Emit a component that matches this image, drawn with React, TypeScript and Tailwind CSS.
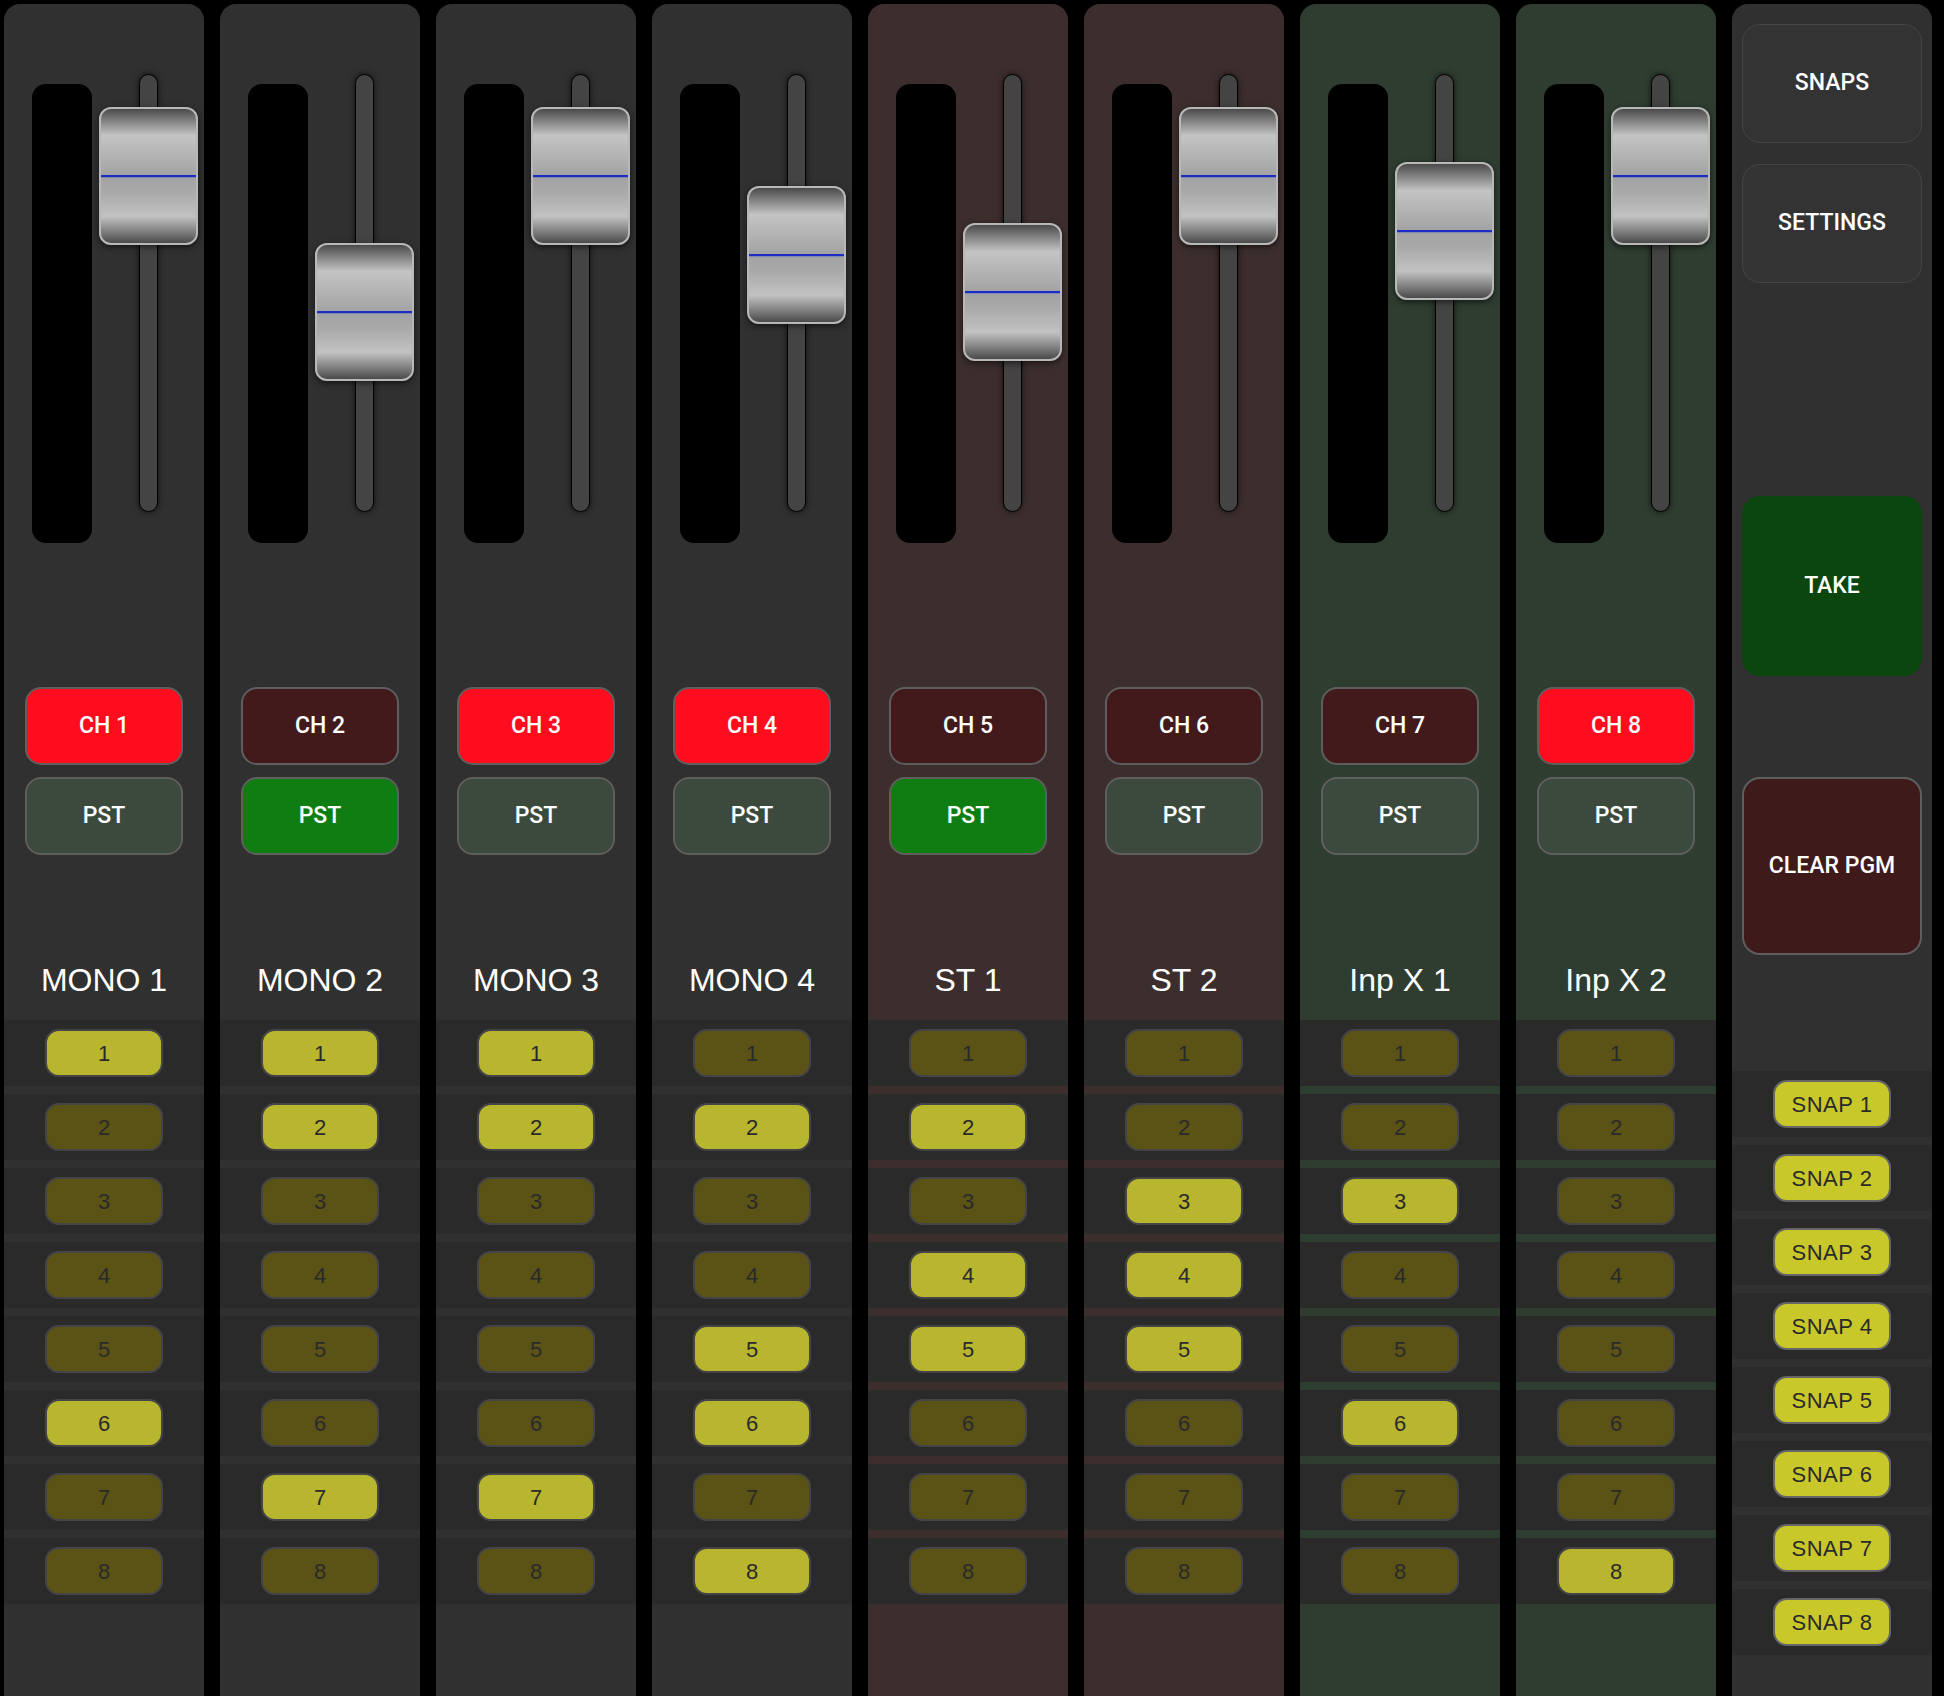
type Strip = {
  name: string;
  ch: string;
  chOn: boolean;
  pstOn: boolean;
  knob: number;
  buses: number[];
  tone: "gray" | "red" | "green";
};

const strips: Strip[] = [
  { name: "MONO 1", ch: "CH 1", chOn: true, pstOn: false, knob: 33, buses: [1, 6], tone: "gray" },
  { name: "MONO 2", ch: "CH 2", chOn: false, pstOn: true, knob: 169, buses: [1, 2, 7], tone: "gray" },
  { name: "MONO 3", ch: "CH 3", chOn: true, pstOn: false, knob: 33, buses: [1, 2, 7], tone: "gray" },
  { name: "MONO 4", ch: "CH 4", chOn: true, pstOn: false, knob: 112, buses: [2, 5, 6, 8], tone: "gray" },
  { name: "ST 1", ch: "CH 5", chOn: false, pstOn: true, knob: 149, buses: [2, 4, 5], tone: "red" },
  { name: "ST 2", ch: "CH 6", chOn: false, pstOn: false, knob: 33, buses: [3, 4, 5], tone: "red" },
  { name: "Inp X 1", ch: "CH 7", chOn: false, pstOn: false, knob: 88, buses: [3, 6], tone: "green" },
  { name: "Inp X 2", ch: "CH 8", chOn: true, pstOn: false, knob: 33, buses: [8], tone: "green" },
];

const toneBg = {
  gray: "bg-[#303030]",
  red: "bg-[#3d2e2e]",
  green: "bg-[#2f3d31]",
};

const sans = "font-['Liberation_Sans',Arial,sans-serif]";
const med = "font-['Roboto','Liberation_Sans',sans-serif] font-medium";

function Fader({ top }: { top: number }) {
  return (
    <div className="relative ml-[7px] w-[99px] h-[438px]">
      <div className="mx-auto h-full w-[19px] rounded-full border border-black bg-[#444444] shadow-[0_0_6px_rgba(0,0,0,0.7)]" />
      <div
        className="absolute left-0 w-[99px] h-[138px] rounded-[12px] border-2 border-[#b8b8b8] bg-[linear-gradient(180deg,#4a4a4a_0%,#767676_7%,#c4c4c4_20%,#b6b6b6_32%,#a2a2a2_50%,#a9a9a9_62%,#c2c2c2_80%,#767676_93%,#4a4a4a_100%)] shadow-[0_2px_6px_rgba(0,0,0,0.6)] flex flex-col justify-center"
        style={{ top }}
      >
        <div className="h-[2px] bg-[#1c2cc4] border-b border-[#8088b0] box-content" />
      </div>
    </div>
  );
}

function ChannelStrip({ s }: { s: Strip }) {
  return (
    <div className={`flex flex-col w-[200px] h-full shrink-0 rounded-t-2xl pt-[70px] ${toneBg[s.tone]}`}>
      <div className="flex items-start h-[469px] pl-[28px]">
        <div className="mt-[10px] w-[60px] h-[459px] rounded-[14px] bg-black" />
        <Fader top={s.knob} />
      </div>

      <div className="mt-[144px] flex flex-col gap-3 px-[21px]">
        <div
          className={`h-[78px] rounded-2xl border-2 border-[#5e5e5e] flex items-center justify-center text-white text-[23px] ${med} ${
            s.chOn ? "bg-[#ff0d1e]" : "bg-[#421a1c]"
          }`}
        >
          {s.ch}
        </div>
        <div
          className={`h-[78px] rounded-2xl border-2 border-[#5e5e5e] flex items-center justify-center text-white text-[23px] ${med} ${
            s.pstOn ? "bg-[#0f7d12]" : "bg-[#3b4a3c]"
          }`}
        >
          PST
        </div>
      </div>

      <div className={`mt-[105px] h-[40px] flex items-center justify-center text-white text-[32px] ${sans}`}>
        {s.name}
      </div>

      <div className="mt-5 flex flex-col gap-2">
        {Array.from({ length: 8 }).map((_, i) => {
          const on = s.buses.includes(i + 1);
          return (
            <div key={i} className="h-[66px] bg-[#2a2a2a] flex items-center justify-center">
              <div
                className={`w-[118px] h-[48px] rounded-[14px] border-2 border-[#454545] flex items-center justify-center text-[22px] text-[#2a2a2a] ${sans} ${
                  on ? "bg-[#b8b52e]" : "bg-[#5b5216]"
                }`}
              >
                {i + 1}
              </div>
            </div>
          );
        })}
      </div>
    </div>
  );
}

function SidePanel() {
  return (
    <div className="flex flex-col w-[200px] h-full shrink-0 rounded-t-2xl bg-[#303030] pt-[20px]">
      <div className="flex flex-col px-[10px]">
        <div className={`h-[119px] rounded-[18px] border border-[#454545] bg-[#333333] flex items-center justify-center text-white text-[23px] ${med}`}>
          SNAPS
        </div>
        <div className={`mt-[21px] h-[119px] rounded-[18px] border border-[#454545] bg-[#333333] flex items-center justify-center text-white text-[23px] ${med}`}>
          SETTINGS
        </div>
        <div className={`mt-[213px] h-[180px] rounded-[18px] bg-[#0a460d] flex items-center justify-center text-white text-[23px] ${med}`}>
          TAKE
        </div>
        <div className={`mt-[101px] h-[178px] rounded-[18px] border-2 border-[#5e5e5e] bg-[#3f1a1b] flex items-center justify-center text-white text-[23px] ${med}`}>
          CLEAR PGM
        </div>
      </div>

      <div className="mt-[116px] flex flex-col gap-2">
        {Array.from({ length: 8 }).map((_, i) => (
          <div key={i} className="h-[66px] bg-[#2a2a2a] flex items-center justify-center">
            <div
              className={`w-[118px] h-[48px] rounded-[14px] border-2 border-[#666666] bg-[#c8c82a] flex items-center justify-center text-[22px] tracking-[0.5px] text-[#2a2a2a] ${sans}`}
            >
              SNAP {i + 1}
            </div>
          </div>
        ))}
      </div>
    </div>
  );
}

export default function App() {
  return (
    <div className="w-[1944px] h-[1696px] overflow-hidden bg-black flex gap-4 pl-[4px] pt-[4px]">
      {strips.map((s) => (
        <ChannelStrip key={s.ch} s={s} />
      ))}
      <SidePanel />
    </div>
  );
}
